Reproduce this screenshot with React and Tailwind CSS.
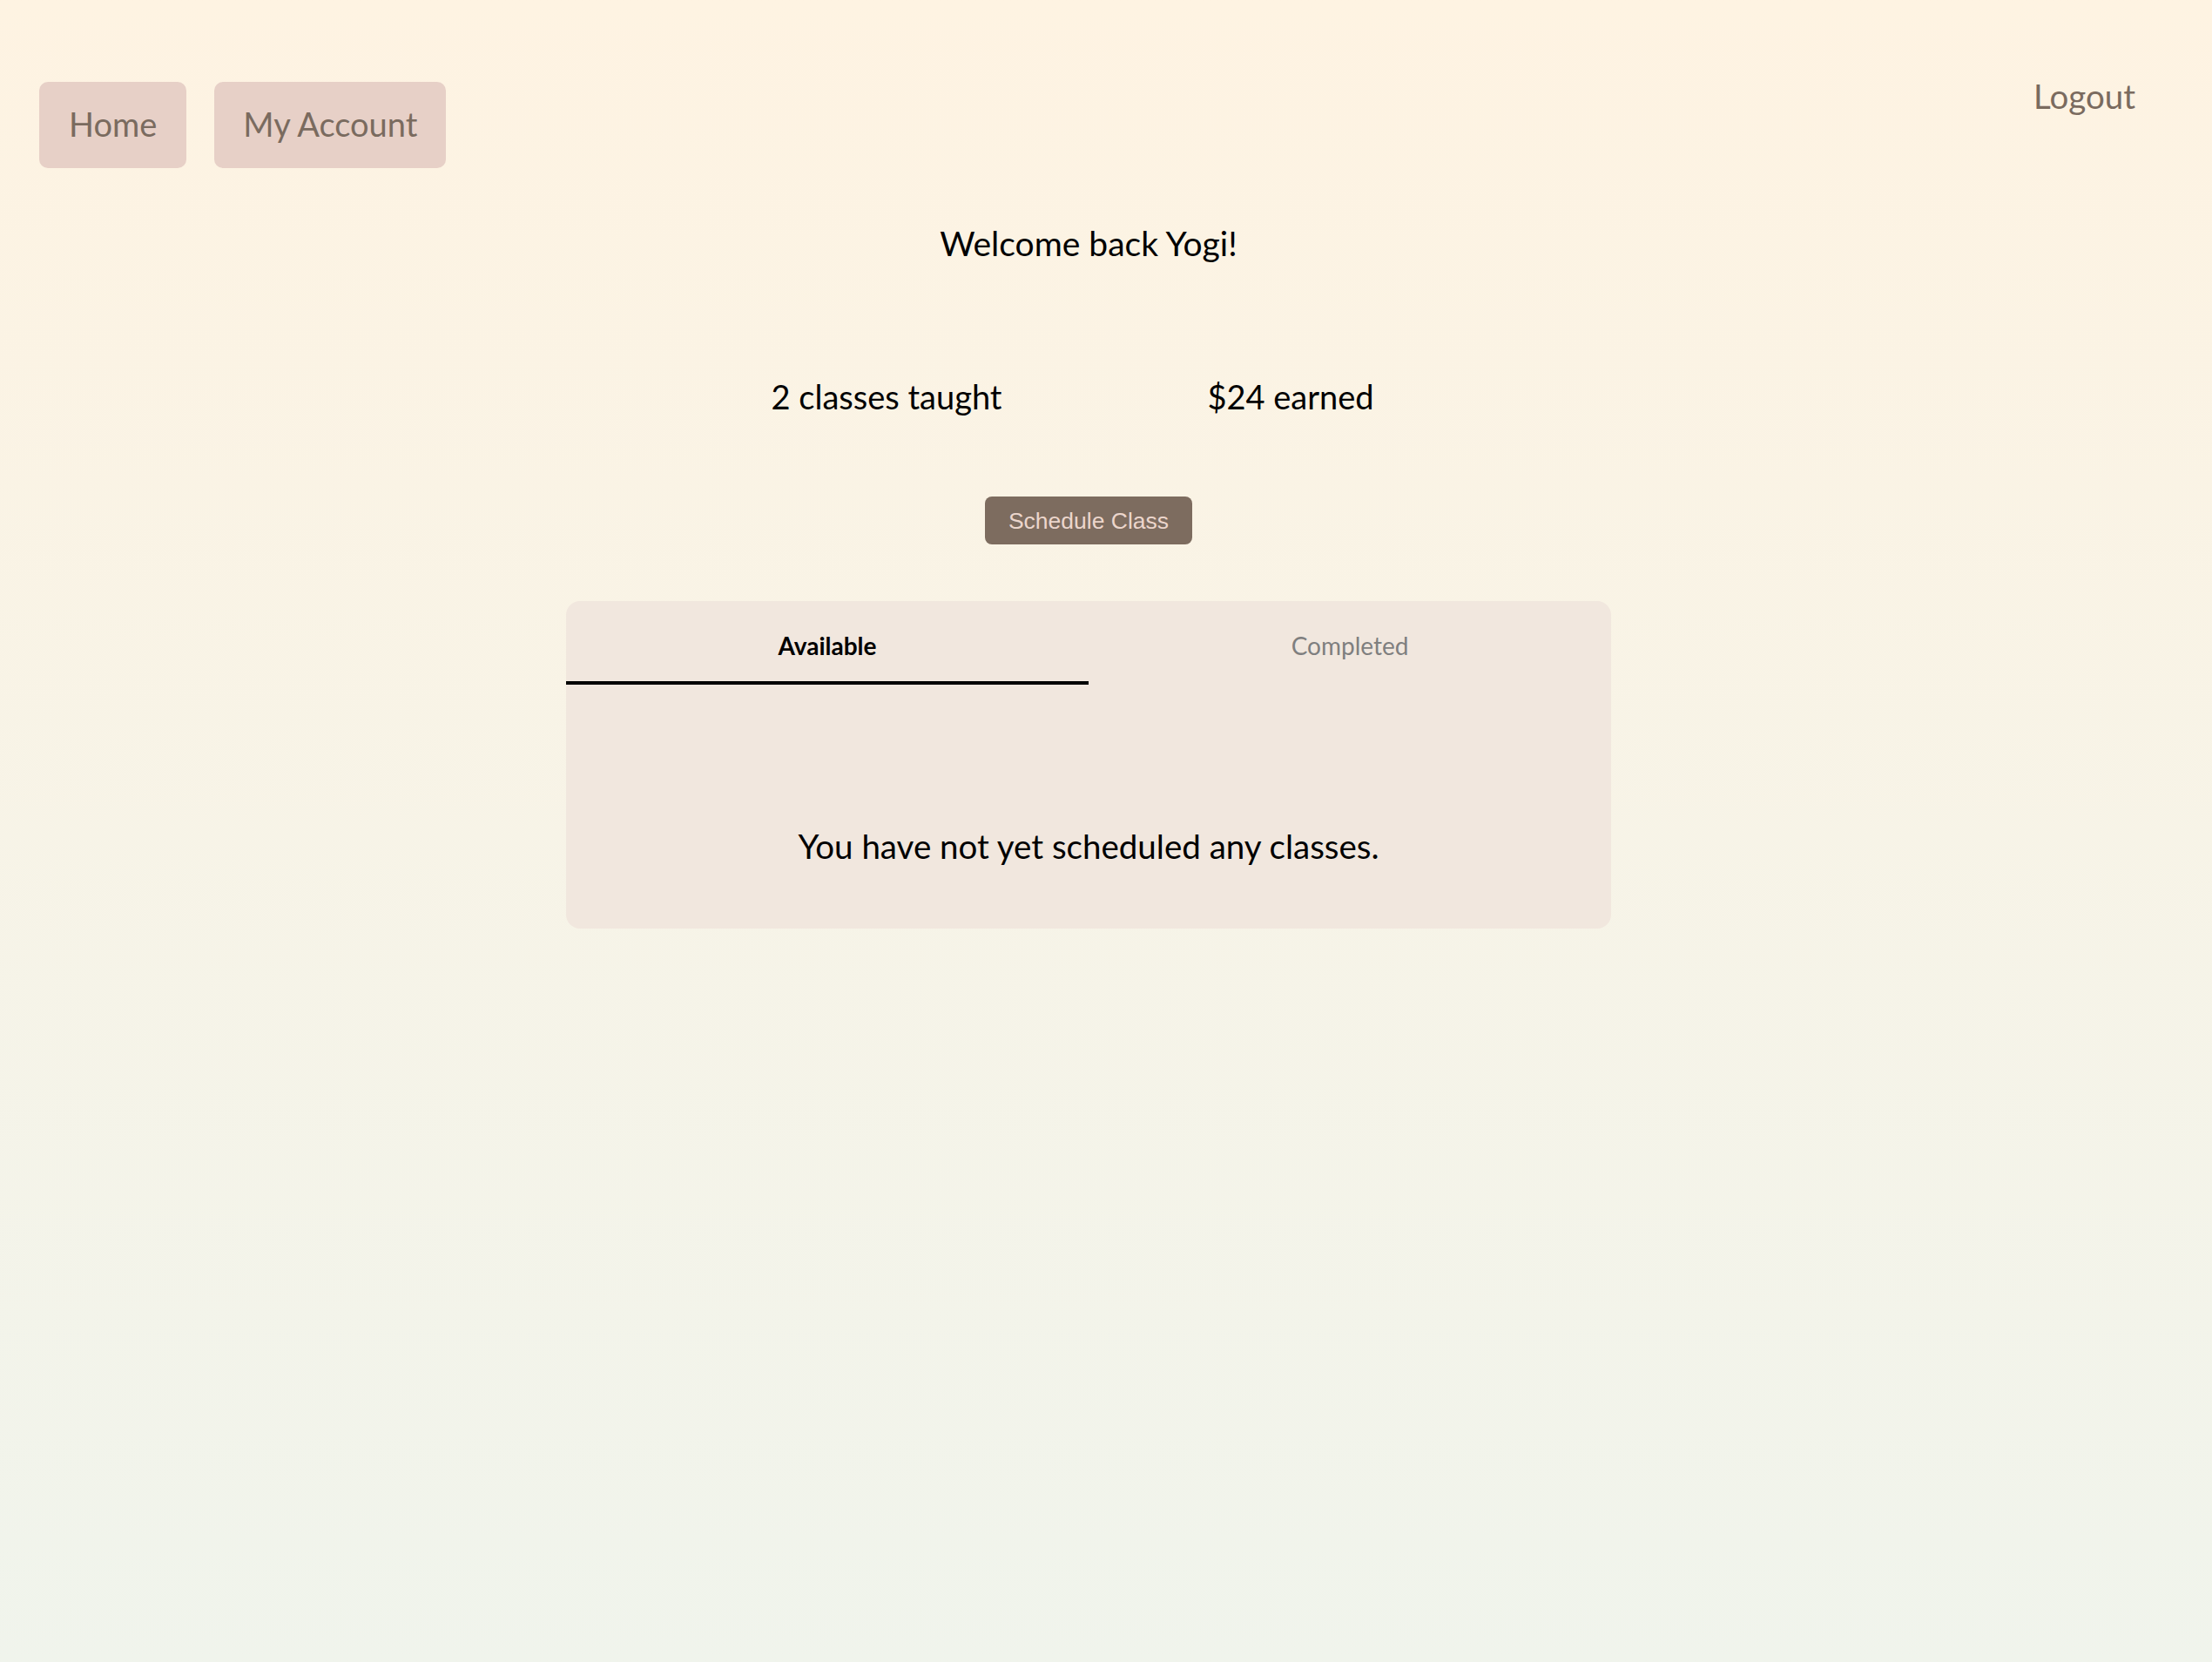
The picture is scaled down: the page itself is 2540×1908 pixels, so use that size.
import React, { useState } from 'react';

const font = { fontFamily: 'Lato, "Noto Sans", sans-serif' };

export default function App() {
  const [tab, setTab] = useState('available');

  return (
    <div
      className="min-h-[1908px] w-full bg-gradient-to-b from-[#fef3e2] to-[#f0f4ec] text-black"
      style={font}
    >
      {/* top nav */}
      <header className="flex items-start justify-between pt-[62px] pl-[45px] pr-[88px]">
        <nav className="mt-[32px] flex gap-[32px]">
          <button className="h-[99px] rounded-[10px] bg-[#e7d0c7] px-[34px] pb-[2px] text-[38px] text-[#7a6b5f]">
            Home
          </button>
          <button className="h-[99px] rounded-[10px] bg-[#e7d0c7] px-[33px] pb-[2px] text-[38px] text-[#7a6b5f]">
            My Account
          </button>
        </nav>
        <button className="flex h-[99px] items-center pb-[2px] text-[38.5px] text-[#7a6b5f]">Logout</button>
      </header>

      <main className="flex flex-col items-center pr-[40px]">
        <h1 className="mt-[63px] text-[39px] leading-[46px]">Welcome back Yogi!</h1>

        <div className="mt-[130px] grid w-[928px] grid-cols-2 text-center text-[38px] leading-[46px]">
          <p>2 classes taught</p>
          <p>$24 earned</p>
        </div>

        <button
          className="mt-[92px] h-[55px] rounded-[8px] bg-[#7d6c5f] px-[27px] pt-[2px] text-[26.5px] text-[#ecd6cc]"
          style={{ fontFamily: '"Liberation Sans", Arial, sans-serif' }}
        >
          Schedule Class
        </button>

        {/* classes card */}
        <section className="mt-[65px] w-[1200px] overflow-hidden rounded-[16px] bg-[#f1e7de]">
          <div className="grid grid-cols-2">
            <button
              onClick={() => setTab('available')}
              className={
                tab === 'available'
                  ? 'flex h-[96px] items-center justify-center border-b-4 border-black pt-[10px] text-[28px] font-bold text-black'
                  : 'flex h-[96px] items-center justify-center border-b-4 border-transparent pt-[10px] text-[28px] text-[#7f7f7f]'
              }
            >
              Available
            </button>
            <button
              onClick={() => setTab('completed')}
              className={
                tab === 'completed'
                  ? 'flex h-[96px] items-center justify-center border-b-4 border-black pt-[10px] text-[28px] font-bold text-black'
                  : 'flex h-[96px] items-center justify-center border-b-4 border-transparent pt-[10px] text-[28px] text-[#7f7f7f]'
              }
            >
              Completed
            </button>
          </div>
          <div className="flex h-[280px] justify-center pt-[163px]">
            <p className="text-[38.5px] leading-[44px]">
              {tab === 'available'
                ? 'You have not yet scheduled any classes.'
                : 'You have not yet completed any classes.'}
            </p>
          </div>
        </section>
      </main>
    </div>
  );
}
